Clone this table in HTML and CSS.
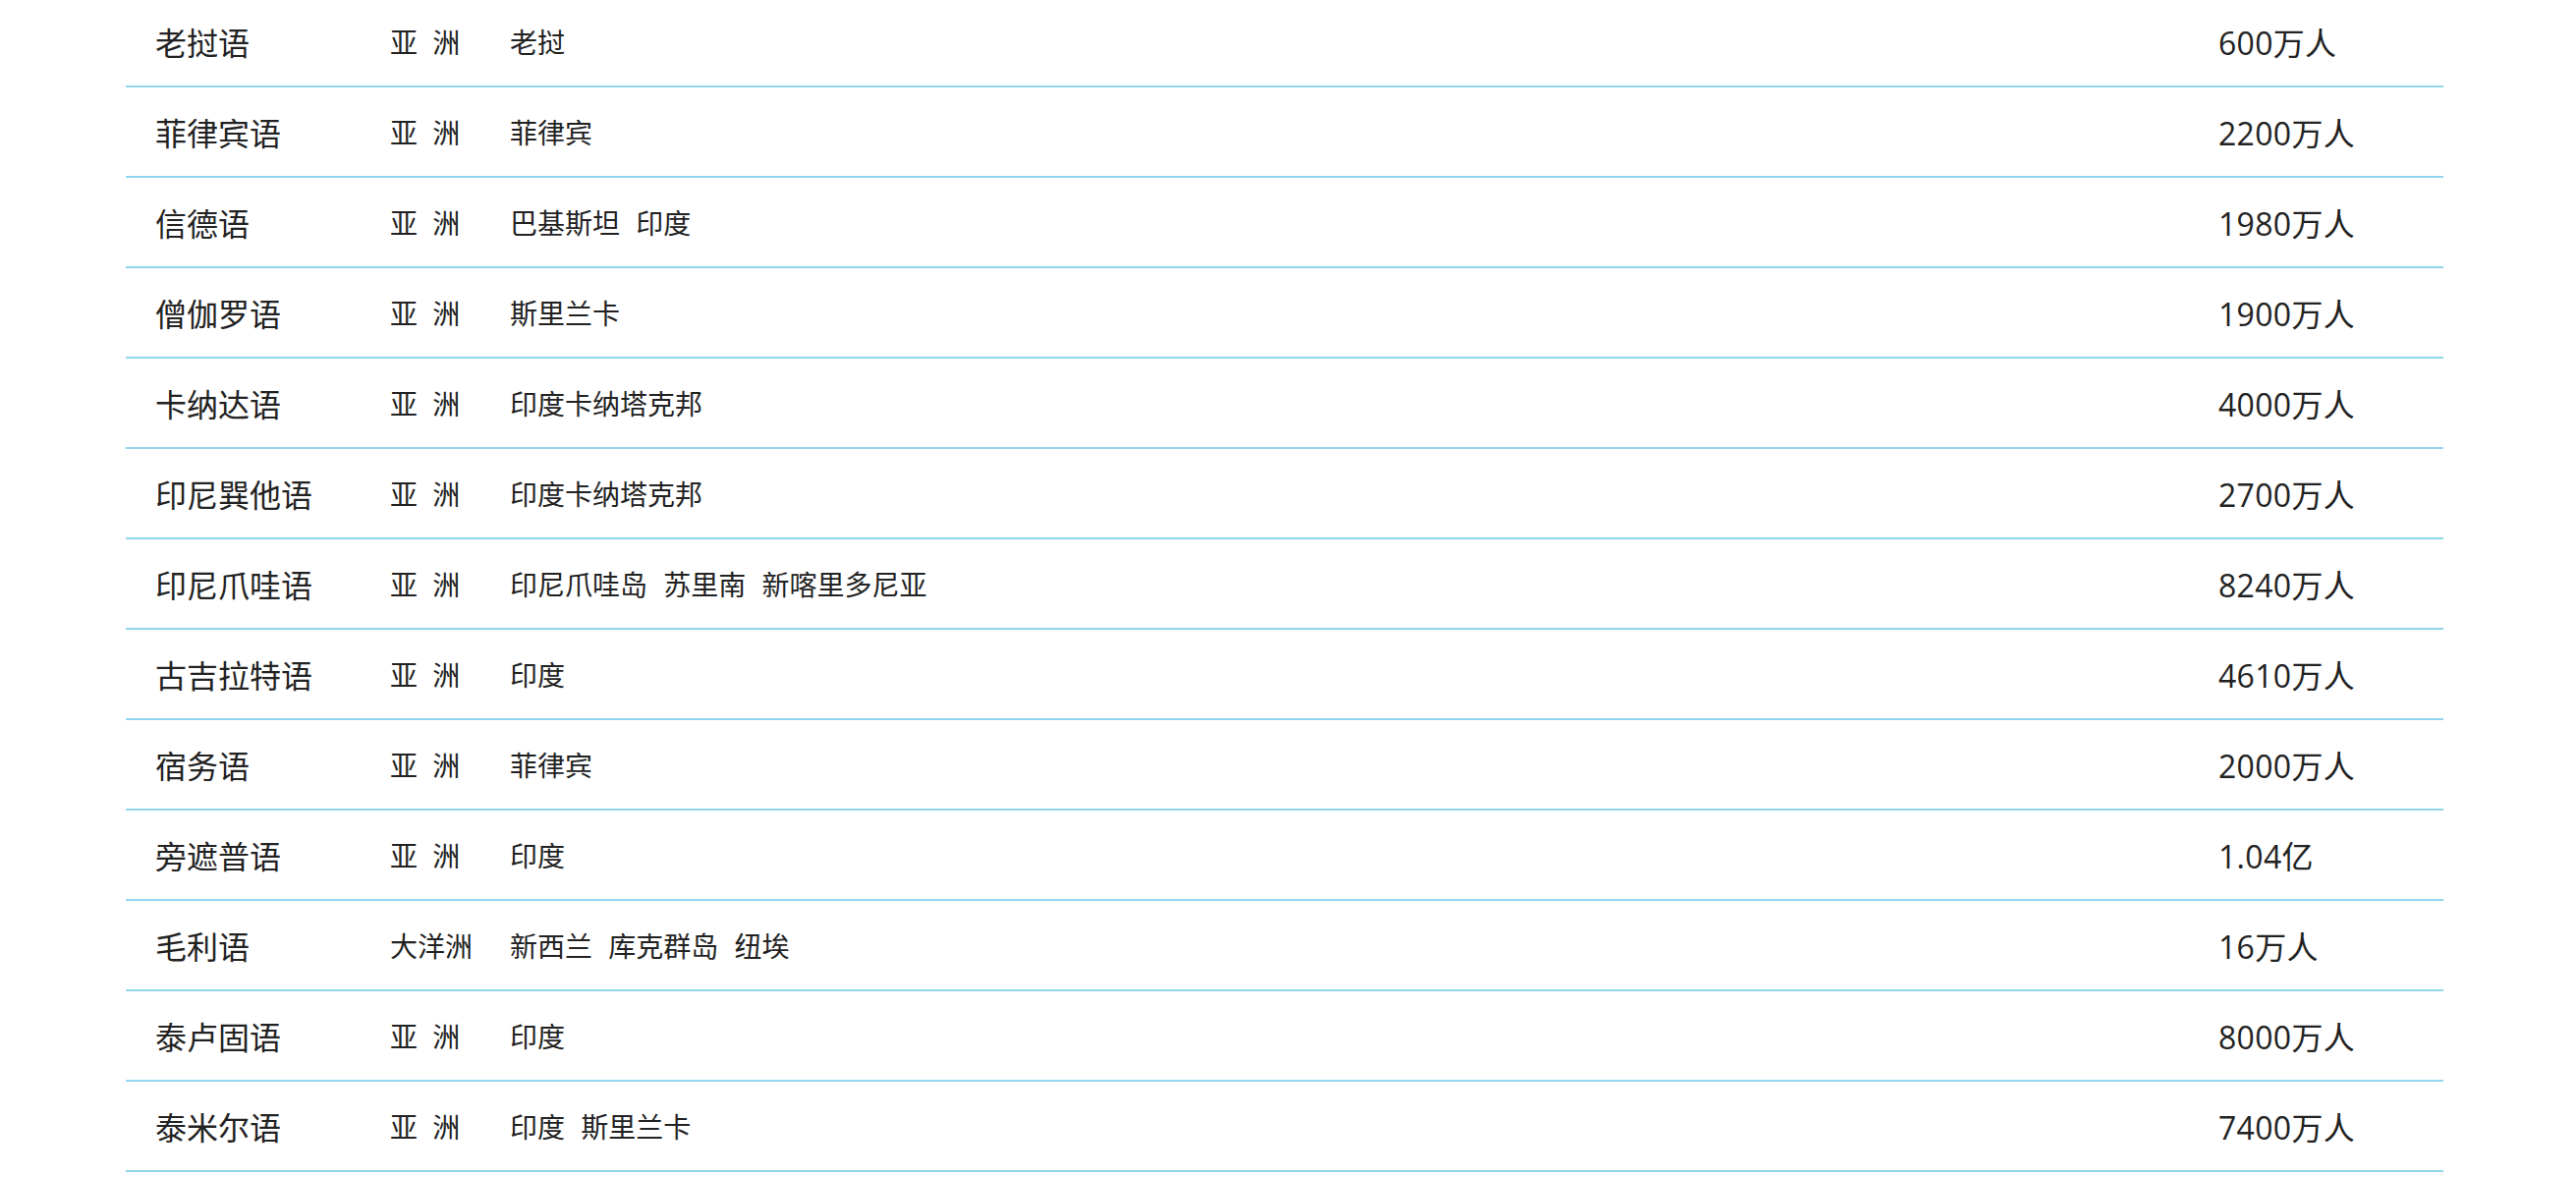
FILE: index.html
```html
<!DOCTYPE html>
<html>
<head>
    <meta charset="UTF-8">
    <title>语言列表</title>
    <link rel="stylesheet" href="styles.css">
</head>
<body>
    <div class="lang">
        <ul class="list">
            <li><span class="name">老挝语</span><span class="area">亚 洲</span><span class="place">老挝</span><span class="num">600万人</span></li>
            <li><span class="name">菲律宾语</span><span class="area">亚 洲</span><span class="place">菲律宾</span><span class="num">2200万人</span></li>
            <li><span class="name">信德语</span><span class="area">亚 洲</span><span class="place">巴基斯坦 印度</span><span class="num">1980万人</span></li>
            <li><span class="name">僧伽罗语</span><span class="area">亚 洲</span><span class="place">斯里兰卡</span><span class="num">1900万人</span></li>
            <li><span class="name">卡纳达语</span><span class="area">亚 洲</span><span class="place">印度卡纳塔克邦</span><span class="num">4000万人</span></li>
            <li><span class="name">印尼巽他语</span><span class="area">亚 洲</span><span class="place">印度卡纳塔克邦</span><span class="num">2700万人</span></li>
            <li><span class="name">印尼爪哇语</span><span class="area">亚 洲</span><span class="place">印尼爪哇岛 苏里南 新喀里多尼亚</span><span class="num">8240万人</span></li>
            <li><span class="name">古吉拉特语</span><span class="area">亚 洲</span><span class="place">印度</span><span class="num">4610万人</span></li>
            <li><span class="name">宿务语</span><span class="area">亚 洲</span><span class="place">菲律宾</span><span class="num">2000万人</span></li>
            <li><span class="name">旁遮普语</span><span class="area">亚 洲</span><span class="place">印度</span><span class="num">1.04亿</span></li>
            <li><span class="name">毛利语</span><span class="area">大洋洲</span><span class="place">新西兰 库克群岛 纽埃</span><span class="num">16万人</span></li>
            <li><span class="name">泰卢固语</span><span class="area">亚 洲</span><span class="place">印度</span><span class="num">8000万人</span></li>
            <li><span class="name">泰米尔语</span><span class="area">亚 洲</span><span class="place">印度 斯里兰卡</span><span class="num">7400万人</span></li>
        </ul>
    </div>
</body>
</html>
```

FILE: styles.css
```css
*{ margin: 0; padding: 0; font-family: "Open Sans", "Noto Sans CJK SC", sans-serif;}
li{ list-style: none;}
body{ background: #fff; color: #222;}
.lang{
    width: 2359px;
    margin: -3px 0 0 128px;
}
.lang .list li{
    display: grid;
    grid-template-columns: 269px 122px 1fr 229px;
    align-items: center;
    height: 90px;
    border-bottom: 2px solid #92d6ee;
}
.lang .list li .name{
    padding-left: 30px;
    font-size: 32px;
}
.lang .list li .area{
    font-size: 28px;
    word-spacing: 8px;
}
.lang .list li .place{
    font-size: 28px;
    word-spacing: 9px;
}
.lang .list li .num{
    font-size: 32px;
    letter-spacing: 0.3px;
}
```
